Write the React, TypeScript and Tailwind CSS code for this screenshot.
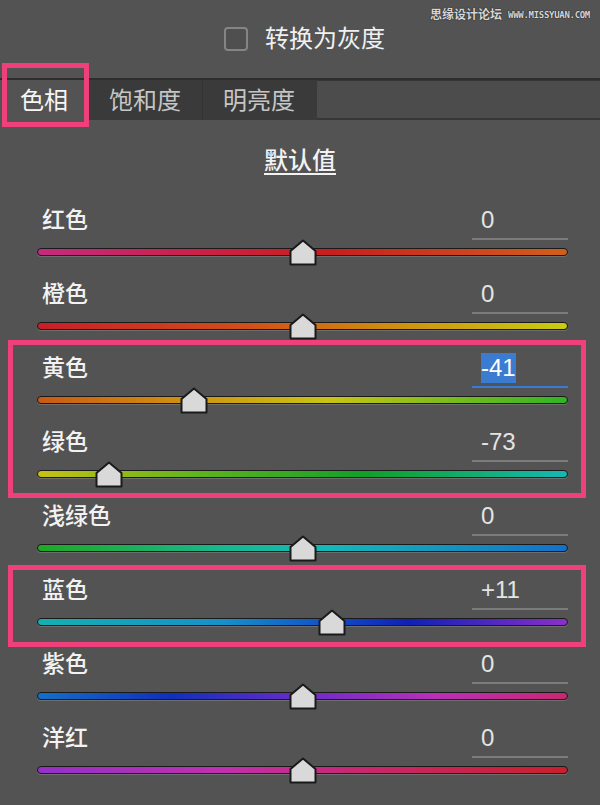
import React from "react";

type Row = {
  label: string;
  value: number;
  track: string;
  selected?: boolean;
};

const rows: Row[] = [
  { label: "红色", value: 0, track: "bg-[linear-gradient(to_right,#c42a80,#cc2040_35%,#c81e1e_55%,#d0601a)]" },
  { label: "橙色", value: 0, track: "bg-[linear-gradient(to_right,#c81e28,#d05018_40%,#d08a10_65%,#c8cc14)]" },
  { label: "黄色", value: -41, selected: true, track: "bg-[linear-gradient(to_right,#c85a14,#d08c10_25%,#c8c414_55%,#30b424)]" },
  { label: "绿色", value: -73, track: "bg-[linear-gradient(to_right,#c8c014,#60b41c_30%,#10a028_62%,#14b8b4)]" },
  { label: "浅绿色", value: 0, track: "bg-[linear-gradient(to_right,#20a824,#18b890_35%,#14b8b8_55%,#1470c8)]" },
  { label: "蓝色", value: 11, track: "bg-[linear-gradient(to_right,#14b0b0,#1890c8_35%,#1050c8_55%,#1020b4_70%,#8a30c8)]" },
  { label: "紫色", value: 0, track: "bg-[linear-gradient(to_right,#1470c8,#1030b8_25%,#6a2cc8_50%,#b830b8_75%,#c82870)]" },
  { label: "洋红", value: 0, track: "bg-[linear-gradient(to_right,#9430c8,#c030b0_35%,#c82870_60%,#c8202c)]" },
];

const fmt = (v: number) => (v > 0 ? `+${v}` : `${v}`);

const Thumb = ({ value }: { value: number }) => {
  const pct = ((value + 100) / 200) * 100;
  return (
    <svg
      width="28"
      height="27"
      viewBox="0 0 28 27"
      className="absolute top-[-9px]"
      style={{ left: `calc(${pct}% - 14px)` }}
    >
      <polygon
        points="14,1.5 26.5,12 26.5,25.5 1.5,25.5 1.5,12"
        fill="#d9d9d9"
        stroke="#1a1a1a"
        strokeWidth="2"
        strokeLinejoin="round"
      />
    </svg>
  );
};

const SliderRow = ({ row }: { row: Row }) => (
  <div className="h-[74px]">
    <div className="flex h-[36px] items-start justify-between">
      <span className="ml-[5px] text-[23px] leading-[32px] font-medium text-[#f2f2f2]">{row.label}</span>
      <div
        className={`w-[96px] h-[36px] border-b-2 pl-[9px] ${
          row.selected ? "border-[#3a7bd5]" : "border-[#7c7c7c]"
        }`}
      >
        <span
          className={`inline-block text-[24px] leading-[30px] ${
            row.selected ? "bg-[#3b7cd0] text-white mt-[1px]" : "text-[#e4e4e4] mt-[1px]"
          }`}
        >
          {fmt(row.value)}
        </span>
      </div>
    </div>
    <div className="relative mt-[8px] h-[8px]">
      <div className={`h-[8px] rounded-full border border-[#1a1a1a] shadow-[0_1px_0_#6e6e6e] ${row.track}`} />
      <Thumb value={row.value} />
    </div>
  </div>
);

export default function App() {
  return (
    <div className="relative h-[805px] w-[600px] overflow-hidden bg-[#535353] font-['Liberation_Sans','Noto_Sans_CJK_SC',sans-serif]">
      {/* watermark */}
      <div className="absolute right-[10px] top-[8px] flex items-center gap-[6px] text-[#d6d6d6] [text-shadow:0_0_1px_#1e1e1e,0_0_1px_#1e1e1e]">
        <span className="text-[12px] leading-[14px] font-bold">思缘设计论坛</span>
        <span className="font-['DejaVu_Sans_Mono',monospace] text-[9px] leading-[14px] font-bold tracking-[-0.3px]">
          WWW.MISSYUAN.COM
        </span>
      </div>

      {/* checkbox */}
      <div className="flex h-[78px] items-start justify-center pl-[9px] pt-[27px]">
        <div className="h-[24px] w-[24px] rounded-[4px] border-2 border-[#858585] bg-[#4f4f4f]" />
        <span className="ml-[17px] text-[24px] leading-[24px] text-[#f0f0f0]">转换为灰度</span>
      </div>

      {/* tabs */}
      <div className="flex h-[42px] border-t-2 border-[#2d2d2d]">
        <div className="flex h-[40px] w-[88px] items-center px-[20px] pt-[2px] text-[24px] text-[#f6f6f6]">色相</div>
        <div className="flex h-[40px] items-center border-r border-[#333] bg-[#3a3a3a] px-[21px] pt-[2px] text-[24px] text-[#c6c6c6]">
          饱和度
        </div>
        <div className="flex h-[40px] items-center bg-[#3a3a3a] pl-[20px] pr-[22px] pt-[2px] text-[24px] text-[#c6c6c6]">
          明亮度
        </div>
        <div className="h-[40px] flex-1 border-b-2 border-t border-[#363636] bg-[#4c4c4c]" />
      </div>

      {/* default */}
      <div className="mt-[25px] flex justify-center">
        <span className="text-[24px] leading-[32px] font-medium text-[#f2f2f2] underline decoration-[1.5px] underline-offset-[4px]">
          默认值
        </span>
      </div>

      {/* sliders */}
      <div className="mt-[27px] pl-[37px] pr-[32px]">
        {rows.map((row) => (
          <SliderRow key={row.label} row={row} />
        ))}
      </div>

      {/* annotation frames */}
      <div className="absolute left-[2px] top-[63px] h-[64px] w-[87px] border-[5px] border-[#f0407c]" />
      <div className="absolute left-[8px] top-[340px] h-[158px] w-[578px] border-[5px] border-[#f0407c]" />
      <div className="absolute left-[8px] top-[565px] h-[82px] w-[578px] border-[5px] border-[#f0407c]" />
    </div>
  );
}
